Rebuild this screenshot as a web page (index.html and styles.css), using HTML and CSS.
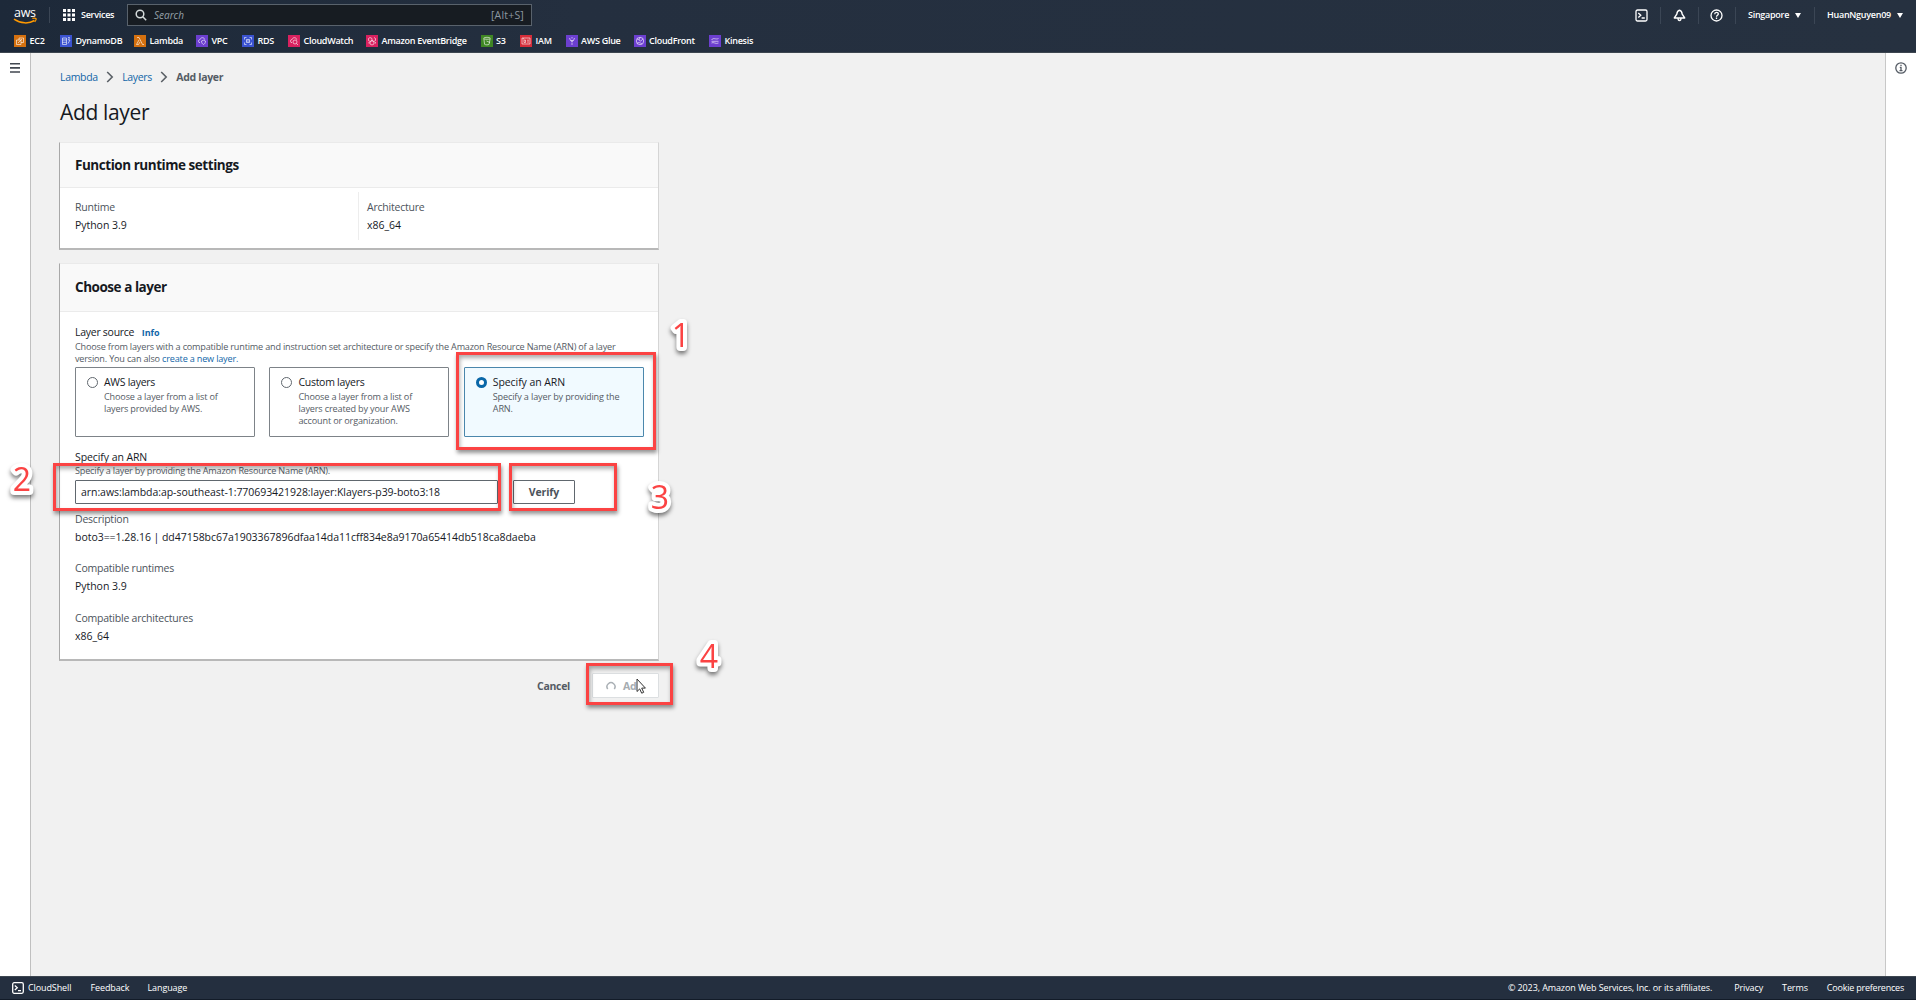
FILE: index.html
```html
<!DOCTYPE html>
<html lang="en">
<head>
<meta charset="utf-8">
<title>Add layer - Lambda</title>
<link rel="stylesheet" href="styles.css">
</head>
<body>
<header class="topbar">
  <div class="navrow">
    <svg class="aws" width="26" height="22" viewBox="0 -4 26 22"><text class="aws-word" x="1" y="10" textLength="22">aws</text><path d="M1 12.200c6.500 4.600 15 4.700 20.500 1.300" fill="none" stroke="#f90" stroke-width="1.500"/><path d="M19.300 11.400c1.700-.3 3.200-.3 3.600.1s-.1 2.100-1.200 3.400" fill="none" stroke="#f90" stroke-width="1.200"/></svg>
    <span class="rule"></span>
    <svg class="grid" width="12" height="12" viewBox="0 0 12 12" fill="#fff"><path d="M0 0h3v3H0zM4.500 0h3v3h-3zM9 0h3v3H9zM0 4.500h3v3H0zM4.500 4.500h3v3h-3zM9 4.500h3v3H9zM0 9h3v3H0zM4.500 9h3v3h-3zM9 9h3v3H9z"/></svg>
    <span class="services">Services</span>
    <div class="search">
      <svg width="12" height="12" viewBox="0 0 12 12" fill="none" stroke="#d5dbdb" stroke-width="1.500"><circle cx="5" cy="5" r="3.800"/><path d="M7.800 7.800l3.400 3.400"/></svg>
      <span class="placeholder">Search</span><span class="shortcut">[Alt+S]</span>
    </div>
    <div class="tools">
      <span class="tool t-shell"><svg width="13" height="13" viewBox="0 0 13 13" fill="none" stroke="#fff" stroke-width="1.300"><rect x="1" y="1" width="11" height="11" rx="1.500"/><path d="M3.300 4l2.500 2.300-2.500 2.300M6.600 9h3.200"/></svg></span>
      <span class="tool t-bell"><svg width="13" height="13" viewBox="0 0 13 13" fill="none" stroke="#fff" stroke-width="1.400" stroke-linejoin="round"><path d="M6.500 1.200C4.200 1.600 4 3.200 3.800 5.200L1.300 9h10.400L9.200 5.200C9 3.200 8.800 1.600 6.500 1.200zM5 9.300c.1 2.900 2.900 2.900 3 0"/></svg></span>
      <span class="tool t-help"><svg width="13" height="13" viewBox="0 0 13 13" fill="none" stroke="#fff" stroke-width="1.300"><circle cx="6.500" cy="6.500" r="5.500"/><path d="M4.700 5.200c0-2.400 3.700-2.300 3.600-.2C8.300 6.300 6.500 6.200 6.500 7.800M6.500 8.600V9.900"/></svg></span>
      <span class="tool t-region"><span>Singapore</span><i class="caret"></i></span>
      <span class="tool t-user"><span>HuanNguyen09</span><i class="caret"></i></span>
    </div>
  </div>
  <nav class="favs">
    <span class="fav"><svg class="orange" viewBox="0 0 12 12"><path d="M2.500 5h4.500v4.500H2.500zM5 5V3h4.500v4.500H7M4 8l4-4"/></svg>EC2</span>
    <span class="fav"><svg class="blue" viewBox="0 0 12 12"><path d="M2.500 3h4M2.500 3v6.500h4V3M2.500 5h4M2.500 7.300h4M8 2.500h1.500L8.500 5H10L8 8.500"/></svg>DynamoDB</span>
    <span class="fav"><svg class="orange" viewBox="0 0 12 12"><path d="M3 2.500h2L8.500 9.500H10M5 5L2.500 9.500h2L6 7"/></svg>Lambda</span>
    <span class="fav"><svg class="purple" viewBox="0 0 12 12"><path d="M4 7.500H3C1.700 5.800 3 4.500 4 4.700 4.500 2 8.500 2 8.700 4.700M5.500 6l2-.8 2 .8c0 2-1 3-2 3.500-1-.5-2-1.500-2-3.500z"/></svg>VPC</span>
    <span class="fav"><svg class="blue" viewBox="0 0 12 12"><path d="M2.500 4.500v-2h2M7.500 2.500h2v2M9.500 7.500v2h-2M4.500 9.500h-2v-2M4.500 4.500h3v3h-3zM4.500 6h3"/></svg>RDS</span>
    <span class="fav"><svg class="pink" viewBox="0 0 12 12"><path d="M4 7.500H3C1.700 5.500 3 4.500 4 4.700 4.500 2 8.500 2 8.700 4.700M8.500 8.500l1.500 1.500"/><circle cx="7" cy="7" r="2"/></svg>CloudWatch</span>
    <span class="fav"><svg class="pink" viewBox="0 0 12 12"><path d="M4 2.500L6 3.500v2L4 6.500 2.500 5.500v-2zM8 2.500l1.500 1v2L8 6.500l-2-1M6 5.500l2 1.500v2L6 10 4 9V7zM3 7v1.500M9.500 7v1.500"/></svg>Amazon EventBridge</span>
    <span class="fav"><svg class="green" viewBox="0 0 12 12"><ellipse cx="6" cy="3.300" rx="3.200" ry="1"/><path d="M2.800 3.300l.8 6c1 .7 3.500.7 4.500 0l1.100-6M5.500 6l3.500 1.500"/></svg>S3</span>
    <span class="fav"><svg class="red" viewBox="0 0 12 12"><path d="M2 3h8v6H2zM4 5h1.500v2.500H4zM7 5.200h2M7 7h2M3.300 3v1.500"/></svg>IAM</span>
    <span class="fav"><svg class="purple" viewBox="0 0 12 12"><path d="M3.500 3l1 2.500h3l1-2.500M5 5.500L6 7l1-1.500M6 7.500v2.500M6 2v1.500"/></svg>AWS Glue</span>
    <span class="fav"><svg class="purple" viewBox="0 0 12 12"><circle cx="6" cy="6" r="3.700"/><path d="M3 4c2 0 2 2 3.500 2S8 4 9 4M3 8.500c1-1.500 3-1 5 .5M6 2.500L5 5"/></svg>CloudFront</span>
    <span class="fav"><svg class="purple" viewBox="0 0 12 12"><path d="M2.500 5c2-3 4 0 7-1.500M2.500 6.300h7M2.500 8c2-1.500 4 1.500 7 0"/></svg>Kinesis</span>
  </nav>
</header>

<div class="body">
  <aside class="left"><svg width="10" height="10" viewBox="0 0 10 10" fill="#414750"><path d="M0 0h10v1.600H0zM0 4.100h10v1.600H0zM0 8.200h10v1.600H0z"/></svg></aside>
  <main class="main">
    <div class="crumbs">
      <a>Lambda</a><svg width="8" height="12" viewBox="0 0 8 12"><path d="M1.200 1l5 5-5 5"/></svg><a>Layers</a><svg width="8" height="12" viewBox="0 0 8 12"><path d="M1.200 1l5 5-5 5"/></svg><b>Add layer</b>
    </div>
    <h1>Add layer</h1>

    <section class="card runtime">
      <h2>Function runtime settings</h2>
      <div class="cols">
        <div class="kv"><span class="k">Runtime</span><span class="v">Python 3.9</span></div>
        <div class="kv second"><span class="k">Architecture</span><span class="v">x86_64</span></div>
      </div>
    </section>

    <section class="card choose">
      <h2>Choose a layer</h2>
      <div class="content">
        <div class="label">Layer source <a class="info">Info</a></div>
        <p class="hint source-hint">Choose from layers with a compatible runtime and instruction set architecture or specify the Amazon Resource Name (ARN) of a layer<br>version. You can also <a>create a new layer.</a></p>
        <div class="tiles">
          <div class="tile"><i class="radio"></i><div><div class="label">AWS layers</div><p class="hint">Choose a layer from a list of<br>layers provided by AWS.</p></div></div>
          <div class="tile"><i class="radio"></i><div><div class="label">Custom layers</div><p class="hint">Choose a layer from a list of<br>layers created by your AWS<br>account or organization.</p></div></div>
          <div class="tile selected"><i class="radio"></i><div><div class="label">Specify an ARN</div><p class="hint">Specify a layer by providing the<br>ARN.</p></div></div>
        </div>
        <div class="label arn-label">Specify an ARN</div>
        <p class="hint arn-hint">Specify a layer by providing the Amazon Resource Name (ARN).</p>
        <div class="arn-row">
          <div class="input">arn:aws:lambda:ap-southeast-1:770693421928:layer:Klayers-p39-boto3:18</div>
          <div class="btn">Verify</div>
        </div>
        <div class="details">
          <div class="kv"><span class="k">Description</span><span class="v hash">boto3==1.28.16 | dd47158bc67a1903367896dfaa14da11cff834e8a9170a65414db518ca8daeba</span></div>
          <div class="kv"><span class="k">Compatible runtimes</span><span class="v">Python 3.9</span></div>
          <div class="kv"><span class="k">Compatible architectures</span><span class="v">x86_64</span></div>
        </div>
      </div>
    </section>

    <div class="actions">
      <span class="cancel">Cancel</span>
      <span class="add"><svg width="10" height="10" viewBox="0 0 10 10"><path d="M1.700 8A4 4 0 1 1 8.300 8" fill="none" stroke="#aab0b5" stroke-width="1.500"/></svg><span>Ad</span></span>
    </div>
  </main>
  <aside class="right"><svg width="12" height="12" viewBox="0 0 12 12" fill="none" stroke="#545b64" stroke-width="1.300"><circle cx="6" cy="6" r="5.200"/><path d="M6 2.700v1.300M4.800 5.300H6v3.200M4.500 8.600h3"/></svg></aside>
</div>

<footer class="footer">
  <svg width="12" height="12" viewBox="0 0 12 12" fill="none" stroke="#fff" stroke-width="1.300"><rect x=".7" y=".7" width="10.600" height="10.600" rx="1.500"/><path d="M2.800 3.500l2.500 2.300-2.500 2.300M6 8.600h3"/></svg>
  <span class="f-shell">CloudShell</span><span class="f-feedback">Feedback</span><span>Language</span>
  <span class="f-copy">© 2023, Amazon Web Services, Inc. or its affiliates.</span><span class="f-privacy">Privacy</span><span class="f-terms">Terms</span><span class="f-cookie">Cookie preferences</span>
</footer>

<div class="mark m1"></div>
<div class="mark m2"></div>
<div class="mark m3"></div>
<div class="mark m4"></div>
<svg class="num n1" width="36" height="40"><text class="halo" x="18" y="32">1</text></svg>
<svg class="num n2" width="36" height="40"><text class="halo" x="18" y="32">2</text></svg>
<svg class="num n3" width="36" height="40"><text class="halo" x="18" y="32">3</text></svg>
<svg class="num n4" width="36" height="40"><text class="halo" x="18" y="32">4</text></svg>
<svg class="cursor" width="11" height="17" viewBox="0 0 11 17"><path d="M1 1v12.500l2.700-2.600 2 4.300 2-.9-2-4.200h3.700z" fill="#fff" stroke="#333" stroke-width="1"/></svg>
</body>
</html>
```
FILE: styles.css
```css
* { box-sizing: border-box; }
body {
  margin: 0;
  height: 1000px;
  display: flex;
  flex-direction: column;
  overflow: hidden;
  position: relative;
  background: #f1f1f1;
  color: #16191f;
  font-family: "Open Sans", "Noto Sans", sans-serif;
  font-size: 10.5px;
  font-weight: 500;
  letter-spacing: -0.15px;
}
svg { display: block; flex: none; }
h1, h2, p { margin: 0; }
a { color: #1166a8; }

.topbar {
  height: 53px;
  flex: none;
  background: linear-gradient(90deg, #1d2939, #242f3f 30%, #263140);
  border-bottom: 1px solid #3d4650;
  color: #fff;
  font-size: 9px;
  font-weight: 600;
  letter-spacing: -0.27px;
}
.navrow { display: flex; align-items: center; height: 30px; padding-left: 13px; }
.aws { margin-top: -2px; overflow: visible; }
.aws-word { font: 500 12.5px "Open Sans", sans-serif; fill: #fff; letter-spacing: 0; }
.rule { width: 1px; height: 16px; margin-left: 10px; background: #3b4655; }
.grid { margin-left: 13px; }
.services { width: 46px; margin-left: 6px; line-height: 12px; padding-bottom: 1px; }
.search {
  display: flex;
  align-items: center;
  width: 405px;
  height: 22px;
  padding: 0 7px 0 7px;
  border: 1px solid #59626c;
  background: #171c22;
  font-weight: 400;
}
.placeholder { margin-left: 7px; flex: 1; font-size: 10px; font-style: italic; color: #95a0a8; letter-spacing: 0; }
.shortcut { font-size: 10.5px; color: #8c98a1; letter-spacing: 0.2px; }
.tools { display: flex; align-items: center; margin-left: auto; }
.tool { display: flex; align-items: center; height: 17px; border-left: 1px solid #3b4655; }
.tool span { padding-bottom: 1px; }
.t-shell { width: 25px; border-left: 0; }
.t-bell { width: 38px; padding-left: 12px; }
.t-help { width: 37px; padding-left: 11px; }
.t-region { width: 79px; padding-left: 12px; }
.t-user { width: 102px; padding-left: 12px; }
.caret { margin-left: 6px; border: 3px solid transparent; border-top: 5px solid #fff; border-bottom: 0; }

.favs {
  display: grid;
  grid-template-columns: 46px 74px 62px 46px 46px 78px 114.500px 39.500px 45.500px 68px 75.500px auto;
  height: 22px;
  padding: 0 0 1px 14px;
  align-items: center;
}
.fav { display: flex; align-items: center; gap: 3.500px; white-space: nowrap; }
.fav svg { width: 12px; height: 12px; fill: none; stroke: #fff; stroke-opacity: .75; stroke-width: .8; }
.orange { background: #d4700f; }
.blue { background: #3b53d0; }
.purple { background: #6c3fd0; }
.pink { background: #d9215f; }
.green { background: #3f8624; }
.red { background: #d62d3a; }

.body { display: flex; flex: 1; min-height: 0; }
.left { width: 31px; padding: 10px 0 0 10px; background: #fff; border-right: 1px solid #c0c0c0; }
.right { width: 31px; padding: 9px 0 0 9px; background: #fff; border-left: 1px solid #c8c8c8; }
.main { flex: 1; padding-left: 28px; }

.crumbs { display: flex; align-items: center; height: 14px; margin: 16.500px 0 0 1px; letter-spacing: -0.33px; }
.crumbs svg { margin: 0 8.200px; fill: none; stroke: #5a6066; stroke-width: 1.6; }
.crumbs b { color: #545b64; letter-spacing: -0.32px; }
h1 { margin: 13.500px 0 0 1px; height: 30px; line-height: 31px; font-size: 21px; font-weight: 400; letter-spacing: -0.35px; color: #16191f; }

.card { width: 600px; background: #fff; border: 1px solid #d5d5d5; border-left-color: #a8a8a8; border-top-color: #eaeaea; border-bottom: 2px solid #b8b8b8; }
.card h2 { border-bottom: 1px solid #ebebeb; background: #f9f9f9; padding-left: 15px; font-size: 13.5px; font-weight: 700; letter-spacing: -0.46px; color: #16191f; }
.runtime { height: 108px; margin-top: 15px; }
.runtime h2 { height: 45px; line-height: 44px; }
.cols { display: flex; padding: 4px 0 0 15px; }
.cols .kv { width: 283px; height: 48px; padding-top: 6px; }
.cols .second { border-left: 1px solid #ededed; padding-left: 8px; }
.kv { display: flex; flex-direction: column; }
.kv span { line-height: 18px; }
.k { color: #4c535b; letter-spacing: -0.22px; }
.v { letter-spacing: -0.04px; white-space: nowrap; }

.choose { height: 398px; margin-top: 13px; }
.choose h2 { height: 48px; line-height: 46px; }
.content { padding: 13px 14px 0 15px; }
.label { height: 15px; line-height: 15px; letter-spacing: -0.27px; white-space: nowrap; }
.info { margin-left: 5px; font-size: 9px; font-weight: 700; letter-spacing: 0; }
.hint { font-size: 9.1px; line-height: 12px; letter-spacing: -0.185px; color: #545b64; white-space: nowrap; }
.source-hint { margin-top: 1px; }
.tiles { display: grid; grid-template-columns: 180px 180px 180px; gap: 14.400px; margin-top: 2px; }
.tile { display: flex; gap: 6px; height: 70px; padding: 7px 0 0 11px; border: 1px solid #7d8388; border-radius: 1px; }
.tile .hint { margin-top: 1px; letter-spacing: -0.15px; }
.selected { background: #f1faff; border-color: #4b87ac; }
.radio { width: 11px; height: 11px; margin-top: 2px; border: 1px solid #60676e; border-radius: 50%; background: #fff; }
.selected .radio { border: 3.500px solid #0a67a8; }
.arn-label, .selected .label { letter-spacing: -0.08px; }
.arn-label { margin-top: 13px; }
.arn-row { display: flex; gap: 15px; margin-top: 3px; }
.input { width: 423px; height: 24px; line-height: 22px; padding-left: 5px; border: 1px solid #60676e; border-radius: 1px; letter-spacing: -0.05px; white-space: nowrap; }
.btn { width: 62px; height: 24px; line-height: 22px; border: 1px solid #60676e; border-radius: 1px; text-align: center; font-weight: 700; letter-spacing: -0.1px; color: #4c535b; }
.details { display: flex; flex-direction: column; gap: 13.400px; margin-top: 6px; }
.hash { letter-spacing: -0.035px; }

.actions { display: flex; align-items: center; justify-content: flex-end; gap: 22px; width: 600px; margin-top: 12px; font-weight: 700; letter-spacing: -0.3px; color: #545b64; }
.add { display: flex; align-items: center; gap: 7px; width: 67px; height: 25px; padding-left: 13px; border: 1px solid #dcdfe1; border-radius: 1px; background: #fff; color: #a6acb1; }

.footer {
  display: flex;
  align-items: center;
  flex: none;
  height: 24px;
  padding: 0 12px;
  background: #242f3f;
  border-top: 1px solid #3d4650;
  border-bottom: 1px solid #121b28;
  color: #fff;
  font-size: 9px;
  font-weight: 500;
  letter-spacing: -0.11px;
}
.footer span { padding-bottom: 1px; }
.f-shell { width: 62.500px; margin-left: 4px; }
.f-feedback { width: 57px; }
.f-copy { margin-left: auto; }
.f-privacy { margin-left: 22px; }
.f-terms { margin-left: 19px; }
.footer .f-cookie { margin-left: 19px; letter-spacing: -0.22px; }

.mark { position: absolute; border: 3px solid #fb4343; box-shadow: 1px 3px 4px rgba(0,0,0,.42), inset 1px 3px 4px rgba(0,0,0,.32); }
.m1 { left: 456px; top: 352px; width: 200px; height: 98px; }
.m2 { left: 53px; top: 463px; width: 448px; height: 48px; }
.m3 { left: 509px; top: 463px; width: 108px; height: 48px; }
.m4 { left: 586px; top: 663px; width: 87px; height: 42px; }
.num { position: absolute; overflow: visible; filter: drop-shadow(0 3px 2px rgba(0,0,0,.5)); }
.halo {
  font: 500 32px "Open Sans", sans-serif;
  letter-spacing: 0;
  text-anchor: middle;
  fill: #fb4343;
  stroke: #fff;
  stroke-width: 8px;
  stroke-linejoin: round;
  paint-order: stroke;
}
.n1 { left: 663px; top: 315px; }
.n2 { left: 4px; top: 459px; }
.n3 { left: 642px; top: 477px; }
.n4 { left: 691px; top: 636px; }
.cursor { position: absolute; left: 636px; top: 678px; }
```
